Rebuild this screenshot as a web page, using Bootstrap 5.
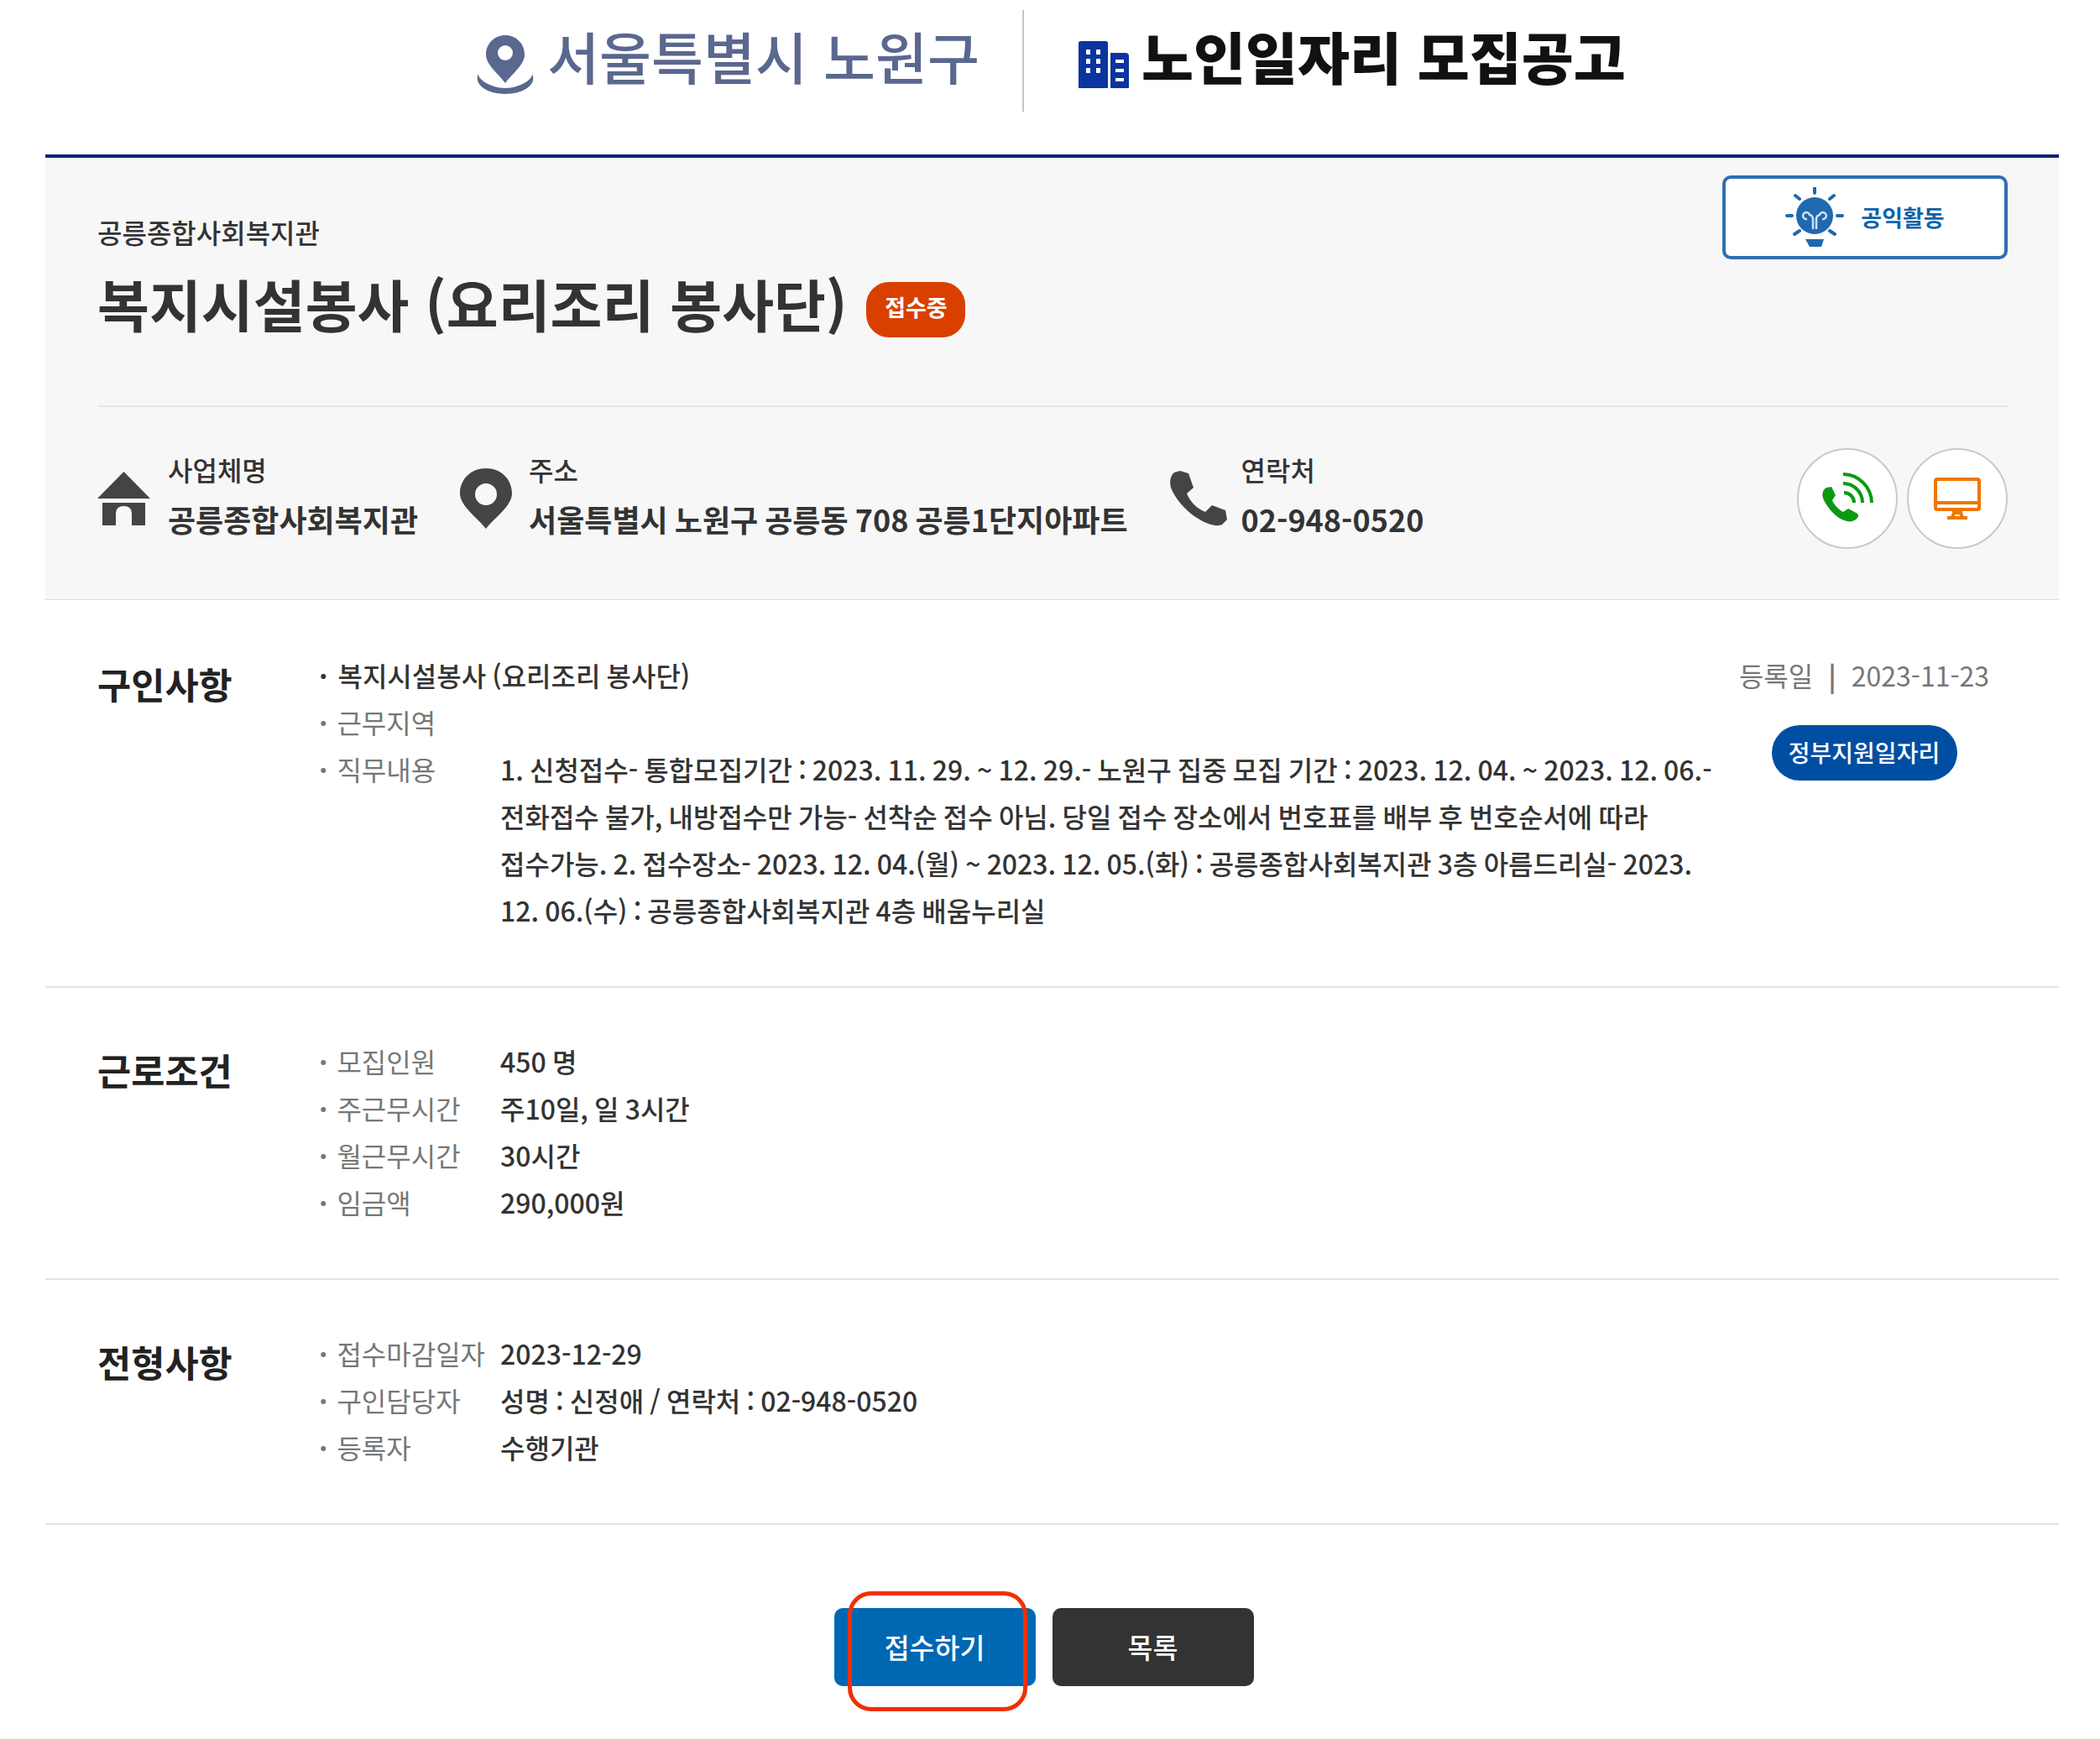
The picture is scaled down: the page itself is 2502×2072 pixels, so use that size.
<!DOCTYPE html>
<html lang="ko">
<head>
<meta charset="utf-8">
<title>노인일자리 모집공고</title>
<link rel="stylesheet" href="https://cdn.jsdelivr.net/npm/bootstrap@5.3.0/dist/css/bootstrap.min.css">
<style>
html,body{background:#fff}
body{font-family:"Noto Sans CJK KR","Noto Sans",sans-serif;color:#333;font-size:32px;line-height:56px;min-height:2072px}
.pg-head{height:184px;padding-top:12px;padding-left:2px}
.pg-brand{height:121px;padding-right:51px;padding-bottom:13px;gap:15px}
.pg-brand svg,.pg-title svg,.info-item svg{flex:none}
.pg-brand svg,.pg-title svg{margin-top:21px}
.pg-brand-t{font-size:67.400px;font-weight:500;color:#5a678f;line-height:1;white-space:nowrap}
.pg-title{height:121px;border-left:2px solid #c4c4c4;padding-left:65px;padding-bottom:13px;gap:15px}
.pg-title-t{font-size:67.400px;font-weight:900;color:#111;line-height:1;white-space:nowrap}
.pg-wrap{margin:0 49px 0 54px}
.sum-panel{background:#f7f7f7;border-top:4px solid #0a2472;border-bottom:1px solid #ddd;padding:0 61px 0 62px;height:531px}
.sum-top{height:297px;border-bottom:2px solid #e6e6e6;padding-top:21px}
.sum-org{font-size:32px;font-weight:500;line-height:56px;margin-top:39px;color:#333}
.sum-name{font-size:67.300px;font-weight:700;line-height:88px;margin-top:13px;margin-bottom:0;color:#333;gap:23px}
.sum-chip{background:#d94000;color:#fff;font-size:27px;font-weight:700;width:118px;height:66px;border-radius:27px;margin-top:16px;padding-bottom:6px}
.act-tag{width:340px;height:100px;background:#fff;border:4px solid #2f6fb0;border-radius:10px;color:#1062ab;font-size:27px;font-weight:700;gap:20px}
.sum-info{padding-top:49px;align-items:flex-start}
.info-item{gap:21px;margin-right:50px;margin-top:-3px}
.info-item:nth-child(2){gap:20px}
.info-item:nth-child(3){gap:17px}
.info-item svg{margin-bottom:6px}
.info-txt{margin-bottom:15px}
.info-lbl{font-size:32px;font-weight:500;line-height:56px;margin-bottom:1px}
.info-val{font-size:36px;font-weight:700;line-height:60px;word-spacing:-2px}
.round-pair{gap:11px}
.round-ic{width:120px;height:120px;border-radius:50%;background:#fff;border:2px solid #c9c9c9}
.sect-row{border-bottom:2px solid #e3e3e3;padding:59px 0 63px 62px;align-items:flex-start}
.sect-first{padding-top:61px;padding-bottom:63px}
.sect-h{width:264px;font-size:43.700px;font-weight:700;line-height:56px;padding-top:10px;color:#222;flex:none}
.sect-body{width:1664px;flex:none}
.kv{display:flex;word-spacing:-1.800px}
.kv-k{width:216px;flex:none;color:#777;white-space:nowrap;word-spacing:0}
.kv-k::before{content:"· ";font-weight:700;margin-right:2px}
.kv-dot{font-weight:700;margin-right:12px}
.kv-v{color:#333;font-weight:500;word-break:keep-all}
.sect-side{width:409px;flex:none;text-align:center;color:#777;padding-right:55px;white-space:nowrap}
.date-sep{font-weight:700;margin:0 18px}
.gov-tag{background:#004ea2;color:#fff;width:221px;height:66px;border-radius:33px;font-size:28px;font-weight:500;margin:32px auto 0;padding-bottom:3px}
.act-row{padding:99px 20px 0 0;gap:20px}
.act-btn{width:240px;height:93px;border-radius:10px;color:#fff;font-size:32.500px;font-weight:500;border:0;padding:0}
.act-blue{background:#0067b3}
.act-dark{background:#333}
.act-btn:hover{color:#fff}
.act-blue:hover{background:#0067b3}
.act-dark:hover{background:#333}
.act-hold{position:relative}
.red-mark{position:absolute;left:16px;top:-20px;width:214px;height:143px;border:5px solid #f03000;border-radius:28px;pointer-events:none}
</style>
</head>
<body>
<header class="pg-head d-flex justify-content-center">
  <div class="pg-brand d-flex align-items-center">
    <svg width="70" height="70" viewBox="0 0 70 70" fill="#5a678f"><path d="M35 0C22 0 12 10 12 23c0 12 14 22 23 34 9-12 23-22 23-34C58 10 48 0 35 0z"/><circle cx="35" cy="21" r="9" fill="#fff"/><path d="M3 46C-3 58 12 70 35 70s38-12 32-24c1 6-14 17-32 17S2 52 3 46z"/></svg>
    <span class="pg-brand-t">서울특별시 노원구</span>
  </div>
  <div class="pg-title d-flex align-items-center">
    <svg width="60" height="56" viewBox="0 0 60 56" fill="#0b34a0"><path d="M0 2Q0 0 3 0h29q3 0 3 2v54H0z"/><path d="M38 14h18q4 0 4 4v38H38z"/><g fill="#fff"><rect x="9" y="10" width="5" height="6"/><rect x="21" y="10" width="5" height="6"/><rect x="9" y="21" width="5" height="6"/><rect x="21" y="21" width="5" height="6"/><rect x="9" y="32" width="5" height="6"/><rect x="21" y="32" width="5" height="6"/><rect x="44" y="22" width="10" height="4"/><rect x="44" y="33" width="10" height="4"/><rect x="44" y="44" width="10" height="4"/></g></svg>
    <span class="pg-title-t">노인일자리 모집공고</span>
  </div>
</header>
<main class="pg-wrap">
  <section class="sum-panel">
    <div class="sum-top d-flex justify-content-between align-items-start">
      <div>
        <div class="sum-org">공릉종합사회복지관</div>
        <h1 class="sum-name d-flex align-items-center">복지시설봉사 (요리조리 봉사단) <span class="sum-chip d-inline-flex align-items-center justify-content-center">접수중</span></h1>
      </div>
      <a class="act-tag d-flex align-items-center justify-content-center text-decoration-none" href="#">
        <svg width="70" height="72" viewBox="0 0 70 72"><g stroke="#1f69b0" stroke-width="4" stroke-linecap="round"><path d="M35 1v6M12 10l5 4M58 10l-5 4M2 34h6M62 34h6M11 56l6-4M59 56l-6-4"/></g><circle cx="35" cy="34" r="22" fill="#1f69b0"/><path d="M24 62h22l-3 9H29z" fill="#1f69b0"/><path d="M33 50V38q0-4-4-5a4 4 0 1 0-3 5M37 50V38q0-4 4-5a4 4 0 1 1 3 5" fill="none" stroke="#cfe1f2" stroke-width="2.500"/></svg>
        <span>공익활동</span>
      </a>
    </div>
    <div class="sum-info d-flex">
      <div class="info-item d-flex align-items-center">
        <svg width="63" height="64" viewBox="0 0 63 64" fill="#444"><path d="M31.500 0L63 32H0z"/><path d="M6 37h51v27H41V50q0-9-9.500-9T22 50v14H6z"/></svg>
        <div class="info-txt"><div class="info-lbl">사업체명</div><div class="info-val">공릉종합사회복지관</div></div>
      </div>
      <div class="info-item d-flex align-items-center">
        <svg width="62" height="72" viewBox="0 0 62 72" fill="#444"><path fill-rule="evenodd" d="M31 0C13 0 0 13 0 30c0 15 21 29 31 42 10-13 31-27 31-42C62 13 49 0 31 0zm0 18a13 13 0 1 1 0 26 13 13 0 0 1 0-26z"/></svg>
        <div class="info-txt"><div class="info-lbl">주소</div><div class="info-val">서울특별시 노원구 공릉동 708 공릉1단지아파트</div></div>
      </div>
      <div class="info-item d-flex align-items-center">
        <svg width="68" height="66" viewBox="0 0 68 66" fill="#444"><path d="M12 0l10 3 6 17-8 7c4 10 12 18 22 22l8-8 16 6 2 11-6 6c-6 3-18 0-30-8C18 47 6 33 1 20-1 12 1 5 5 2z"/></svg>
        <div class="info-txt"><div class="info-lbl">연락처</div><div class="info-val">02-948-0520</div></div>
      </div>
      <div class="round-pair d-flex ms-auto">
        <span class="round-ic d-flex align-items-center justify-content-center">
          <svg width="62" height="62" viewBox="0 0 62 62"><path d="M6 18l6-1 5 10-4 6c2 5 7 11 13 14l6-4 11 6c2 2 1 5-2 7-4 3-9 3-14 1C18 54 8 43 3 33 0 27 1 21 6 18z" fill="#0a9a12"/><g fill="none" stroke="#0a9a12" stroke-width="4"><path d="M26 2A34.500 34.500 0 0 1 60 36"/><path d="M26 13A23 23 0 0 1 49 36"/><path d="M27 24A12 12 0 0 1 39 36"/></g></svg>
        </span>
        <span class="round-ic d-flex align-items-center justify-content-center">
          <svg width="56" height="50" viewBox="0 0 56 50" fill="none" stroke="#ee7700" stroke-width="4"><rect x="2" y="2" width="52" height="36" rx="2"/><path d="M2 30h52M24 38v4h8v-4M16 48h24M22 48l2-6M34 48l-2-6"/></svg>
        </span>
      </div>
    </div>
  </section>

  <section class="sect-row sect-first d-flex">
    <h2 class="sect-h m-0">구인사항</h2>
    <div class="sect-body">
      <div class="kv"><div class="kv-v"><span class="kv-dot">·</span>복지시설봉사 (요리조리 봉사단)</div></div>
      <div class="kv"><div class="kv-k">근무지역</div></div>
      <div class="kv"><div class="kv-k">직무내용</div><div class="kv-v">1. 신청접수- 통합모집기간 : 2023. 11. 29. ~ 12. 29.- 노원구 집중 모집 기간 : 2023. 12. 04. ~ 2023. 12. 06.- 전화접수 불가, 내방접수만 가능- 선착순 접수 아님. 당일 접수 장소에서 번호표를 배부 후 번호순서에 따라 접수가능. 2. 접수장소- 2023. 12. 04.(월) ~ 2023. 12. 05.(화) : 공릉종합사회복지관 3층 아름드리실- 2023. 12. 06.(수) : 공릉종합사회복지관 4층 배움누리실</div></div>
    </div>
    <div class="sect-side">
      <div>등록일<span class="date-sep">|</span>2023-11-23</div>
      <div class="gov-tag d-flex align-items-center justify-content-center">정부지원일자리</div>
    </div>
  </section>

  <section class="sect-row d-flex">
    <h2 class="sect-h m-0">근로조건</h2>
    <div class="sect-body">
      <div class="kv"><div class="kv-k">모집인원</div><div class="kv-v">450 명</div></div>
      <div class="kv"><div class="kv-k">주근무시간</div><div class="kv-v">주10일, 일 3시간</div></div>
      <div class="kv"><div class="kv-k">월근무시간</div><div class="kv-v">30시간</div></div>
      <div class="kv"><div class="kv-k">임금액</div><div class="kv-v">290,000원</div></div>
    </div>
  </section>

  <section class="sect-row d-flex">
    <h2 class="sect-h m-0">전형사항</h2>
    <div class="sect-body">
      <div class="kv"><div class="kv-k">접수마감일자</div><div class="kv-v">2023-12-29</div></div>
      <div class="kv"><div class="kv-k">구인담당자</div><div class="kv-v">성명 : 신정애 / 연락처 : 02-948-0520</div></div>
      <div class="kv"><div class="kv-k">등록자</div><div class="kv-v">수행기관</div></div>
    </div>
  </section>

  <div class="act-row d-flex justify-content-center">
    <div class="act-hold">
      <a class="btn act-btn act-blue d-flex align-items-center justify-content-center" href="#">접수하기</a>
      <span class="red-mark"></span>
    </div>
    <a class="btn act-btn act-dark d-flex align-items-center justify-content-center" href="#">목록</a>
  </div>
</main>
<script src="https://cdn.jsdelivr.net/npm/bootstrap@5.3.0/dist/js/bootstrap.bundle.min.js"></script>
</body>
</html>
